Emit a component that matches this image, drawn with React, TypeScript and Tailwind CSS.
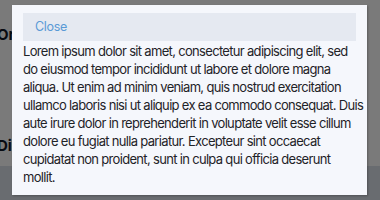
import React from 'react';

const lines = [
  'Lorem ipsum dolor sit amet, consectetur adipiscing elit, sed',
  'do eiusmod tempor incididunt ut labore et dolore magna',
  'aliqua. Ut enim ad minim veniam, quis nostrud exercitation',
  'ullamco laboris nisi ut aliquip ex ea commodo consequat. Duis',
  'aute irure dolor in reprehenderit in voluptate velit esse cillum',
  'dolore eu fugiat nulla pariatur. Excepteur sint occaecat',
  'cupidatat non proident, sunt in culpa qui officia deserunt',
  'mollit.',
];

export default function App() {
  return (
    <div className="relative w-[380px] h-[200px] overflow-hidden bg-white font-['Inter',sans-serif]">
      {/* Page behind the dialog */}
      <div className="flex flex-col h-full">
        <div className="pt-[24px] -ml-[3px] text-[15px] font-bold text-[#111827]">Orders</div>
        <div className="pt-[17px] pl-[21px] text-[13px] text-[#1e3a5f]">Details</div>
        <div className="pt-[52px] -ml-[3px] text-[15px] font-bold text-[#111827]">Diagnostics</div>
        <div className="mt-[8px] flex-1 bg-[#dbe2ea] pl-[18px] pt-[5px] text-[13px] text-[#4b5563]">Summary</div>
      </div>

      {/* Overlay */}
      <div className="absolute inset-0 bg-black/[0.52]" />

      {/* Dialog */}
      <div className="absolute left-[12px] top-[5px] w-[355px] h-[190px] bg-[#f5f7fc] shadow-[1px_1px_2px_rgba(0,0,0,0.25)] px-[11px] pt-[8px]">
        <div className="h-[28px] bg-[#e5e9f1] flex items-center pl-[12px] text-[12.5px] tracking-[-0.3px] text-[#5a9ad6]">Close</div>
        <p className="pt-[1px] text-[13px] tracking-[-0.68px] leading-[18px] text-[#1f2328]">
          {lines.map((line, i) => (
            <span key={i} className="block whitespace-nowrap">{line}</span>
          ))}
        </p>
      </div>
    </div>
  );
}
